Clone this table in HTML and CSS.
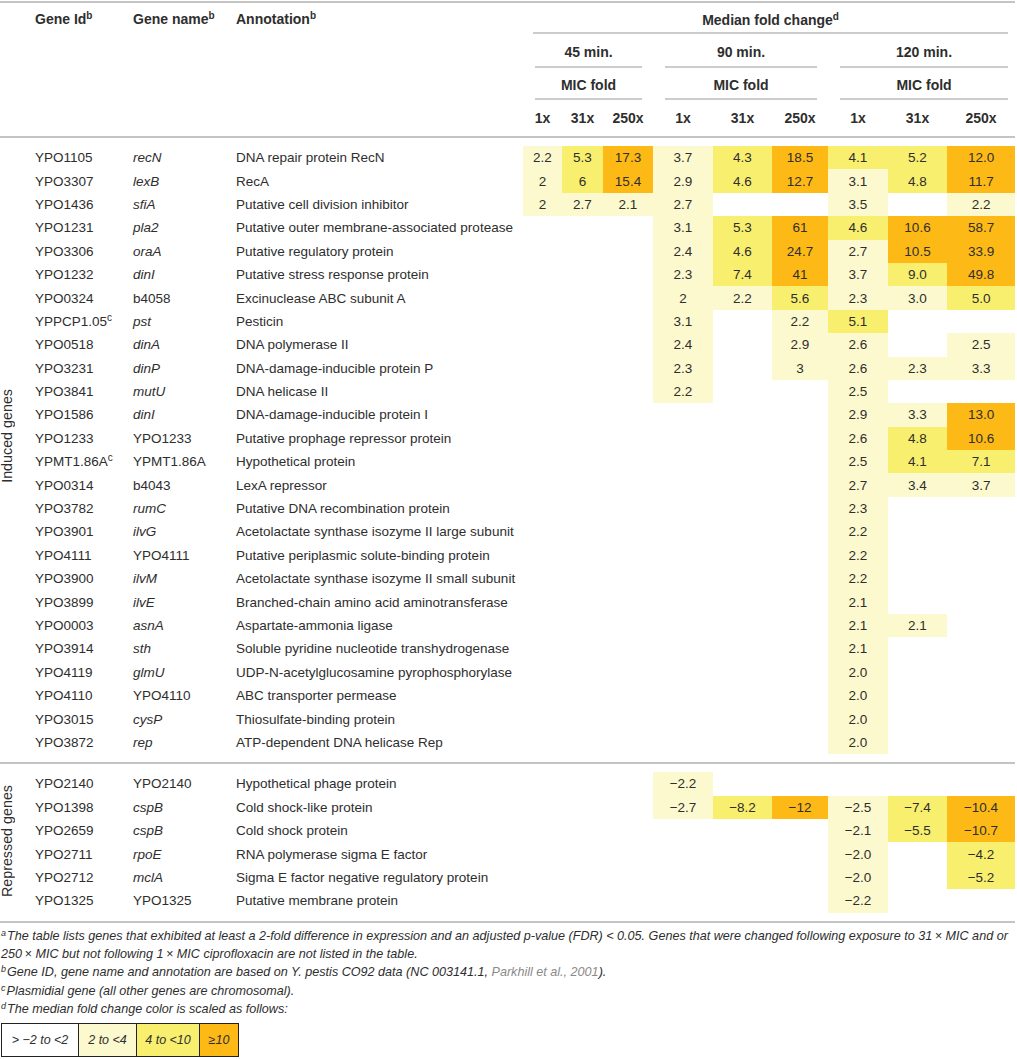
FILE: index.html
```html
<!DOCTYPE html>
<html lang="en">
<head>
    <meta charset="UTF-8">
    <title>Genes differentially expressed after ciprofloxacin exposure</title>
    <link rel="stylesheet" href="styles.css">
</head>
<body>

<table class="genes">
    <colgroup>
        <col class="w-label"><col class="w-id"><col class="w-name"><col class="w-ann">
        <col class="w-39"><col class="w-41"><col class="w-50">
        <col class="w-60"><col class="w-59"><col class="w-56">
        <col class="w-60"><col class="w-59"><col class="w-68">
    </colgroup>
    <thead>
        <tr class="h-top">
            <th></th>
            <th>Gene Id<sup>b</sup></th>
            <th>Gene name<sup>b</sup></th>
            <th>Annotation<sup>b</sup></th>
            <th colspan="9" class="span span-median"><div class="rule">Median fold change<sup>d</sup></div></th>
        </tr>
        <tr class="h-time">
            <th colspan="4"></th>
            <th colspan="3" class="span"><div class="rule">45 min.</div></th>
            <th colspan="3" class="span"><div class="rule">90 min.</div></th>
            <th colspan="3" class="span span-last"><div class="rule">120 min.</div></th>
        </tr>
        <tr class="h-mic">
            <th colspan="4"></th>
            <th colspan="3" class="span"><div class="rule">MIC fold</div></th>
            <th colspan="3" class="span"><div class="rule">MIC fold</div></th>
            <th colspan="3" class="span span-last"><div class="rule">MIC fold</div></th>
        </tr>
        <tr class="h-dose">
            <th colspan="4"></th>
            <th>1x</th><th>31x</th><th>250x</th>
            <th>1x</th><th>31x</th><th>250x</th>
            <th>1x</th><th>31x</th><th>250x</th>
        </tr>
    </thead>

    <tbody class="induced">
        <tr class="gap"><td colspan="13"></td></tr>
        <tr>
            <td rowspan="26" class="group group-induced"><span>Induced genes</span></td>
            <td>YPO1105</td><td><i>recN</i></td><td>DNA repair protein RecN</td>
            <td class="lo">2.2</td><td class="mid">5.3</td><td class="hi">17.3</td>
            <td class="lo">3.7</td><td class="mid">4.3</td><td class="hi">18.5</td>
            <td class="mid">4.1</td><td class="mid">5.2</td><td class="hi">12.0</td>
        </tr>
        <tr>
            <td>YPO3307</td><td><i>lexB</i></td><td>RecA</td>
            <td class="lo">2</td><td class="mid">6</td><td class="hi">15.4</td>
            <td class="lo">2.9</td><td class="mid">4.6</td><td class="hi">12.7</td>
            <td class="lo">3.1</td><td class="mid">4.8</td><td class="hi">11.7</td>
        </tr>
        <tr>
            <td>YPO1436</td><td><i>sfiA</i></td><td>Putative cell division inhibitor</td>
            <td class="lo">2</td><td class="lo">2.7</td><td class="lo">2.1</td>
            <td class="lo">2.7</td><td></td><td></td>
            <td class="lo">3.5</td><td></td><td class="lo">2.2</td>
        </tr>
        <tr>
            <td>YPO1231</td><td><i>pla2</i></td><td>Putative outer membrane-associated protease</td>
            <td></td><td></td><td></td>
            <td class="lo">3.1</td><td class="mid">5.3</td><td class="hi">61</td>
            <td class="mid">4.6</td><td class="hi">10.6</td><td class="hi">58.7</td>
        </tr>
        <tr>
            <td>YPO3306</td><td><i>oraA</i></td><td>Putative regulatory protein</td>
            <td></td><td></td><td></td>
            <td class="lo">2.4</td><td class="mid">4.6</td><td class="hi">24.7</td>
            <td class="lo">2.7</td><td class="hi">10.5</td><td class="hi">33.9</td>
        </tr>
        <tr>
            <td>YPO1232</td><td><i>dinI</i></td><td>Putative stress response protein</td>
            <td></td><td></td><td></td>
            <td class="lo">2.3</td><td class="mid">7.4</td><td class="hi">41</td>
            <td class="lo">3.7</td><td class="mid">9.0</td><td class="hi">49.8</td>
        </tr>
        <tr>
            <td>YPO0324</td><td>b4058</td><td>Excinuclease ABC subunit A</td>
            <td></td><td></td><td></td>
            <td class="lo">2</td><td class="lo">2.2</td><td class="mid">5.6</td>
            <td class="lo">2.3</td><td class="lo">3.0</td><td class="mid">5.0</td>
        </tr>
        <tr>
            <td>YPPCP1.05<sup>c</sup></td><td><i>pst</i></td><td>Pesticin</td>
            <td></td><td></td><td></td>
            <td class="lo">3.1</td><td></td><td class="lo">2.2</td>
            <td class="mid">5.1</td><td></td><td></td>
        </tr>
        <tr>
            <td>YPO0518</td><td><i>dinA</i></td><td>DNA polymerase II</td>
            <td></td><td></td><td></td>
            <td class="lo">2.4</td><td></td><td class="lo">2.9</td>
            <td class="lo">2.6</td><td></td><td class="lo">2.5</td>
        </tr>
        <tr>
            <td>YPO3231</td><td><i>dinP</i></td><td>DNA-damage-inducible protein P</td>
            <td></td><td></td><td></td>
            <td class="lo">2.3</td><td></td><td class="lo">3</td>
            <td class="lo">2.6</td><td class="lo">2.3</td><td class="lo">3.3</td>
        </tr>
        <tr>
            <td>YPO3841</td><td><i>mutU</i></td><td>DNA helicase II</td>
            <td></td><td></td><td></td>
            <td class="lo">2.2</td><td></td><td></td>
            <td class="lo">2.5</td><td></td><td></td>
        </tr>
        <tr>
            <td>YPO1586</td><td><i>dinI</i></td><td>DNA-damage-inducible protein I</td>
            <td></td><td></td><td></td>
            <td></td><td></td><td></td>
            <td class="lo">2.9</td><td class="lo">3.3</td><td class="hi">13.0</td>
        </tr>
        <tr>
            <td>YPO1233</td><td>YPO1233</td><td>Putative prophage repressor protein</td>
            <td></td><td></td><td></td>
            <td></td><td></td><td></td>
            <td class="lo">2.6</td><td class="mid">4.8</td><td class="hi">10.6</td>
        </tr>
        <tr>
            <td>YPMT1.86A<sup>c</sup></td><td>YPMT1.86A</td><td>Hypothetical protein</td>
            <td></td><td></td><td></td>
            <td></td><td></td><td></td>
            <td class="lo">2.5</td><td class="mid">4.1</td><td class="mid">7.1</td>
        </tr>
        <tr>
            <td>YPO0314</td><td>b4043</td><td>LexA repressor</td>
            <td></td><td></td><td></td>
            <td></td><td></td><td></td>
            <td class="lo">2.7</td><td class="lo">3.4</td><td class="lo">3.7</td>
        </tr>
        <tr>
            <td>YPO3782</td><td><i>rumC</i></td><td>Putative DNA recombination protein</td>
            <td></td><td></td><td></td>
            <td></td><td></td><td></td>
            <td class="lo">2.3</td><td></td><td></td>
        </tr>
        <tr>
            <td>YPO3901</td><td><i>ilvG</i></td><td>Acetolactate synthase isozyme II large subunit</td>
            <td></td><td></td><td></td>
            <td></td><td></td><td></td>
            <td class="lo">2.2</td><td></td><td></td>
        </tr>
        <tr>
            <td>YPO4111</td><td>YPO4111</td><td>Putative periplasmic solute-binding protein</td>
            <td></td><td></td><td></td>
            <td></td><td></td><td></td>
            <td class="lo">2.2</td><td></td><td></td>
        </tr>
        <tr>
            <td>YPO3900</td><td><i>ilvM</i></td><td>Acetolactate synthase isozyme II small subunit</td>
            <td></td><td></td><td></td>
            <td></td><td></td><td></td>
            <td class="lo">2.2</td><td></td><td></td>
        </tr>
        <tr>
            <td>YPO3899</td><td><i>ilvE</i></td><td>Branched-chain amino acid aminotransferase</td>
            <td></td><td></td><td></td>
            <td></td><td></td><td></td>
            <td class="lo">2.1</td><td></td><td></td>
        </tr>
        <tr>
            <td>YPO0003</td><td><i>asnA</i></td><td>Aspartate-ammonia ligase</td>
            <td></td><td></td><td></td>
            <td></td><td></td><td></td>
            <td class="lo">2.1</td><td class="lo">2.1</td><td></td>
        </tr>
        <tr>
            <td>YPO3914</td><td><i>sth</i></td><td>Soluble pyridine nucleotide transhydrogenase</td>
            <td></td><td></td><td></td>
            <td></td><td></td><td></td>
            <td class="lo">2.1</td><td></td><td></td>
        </tr>
        <tr>
            <td>YPO4119</td><td><i>glmU</i></td><td>UDP-N-acetylglucosamine pyrophosphorylase</td>
            <td></td><td></td><td></td>
            <td></td><td></td><td></td>
            <td class="lo">2.0</td><td></td><td></td>
        </tr>
        <tr>
            <td>YPO4110</td><td>YPO4110</td><td>ABC transporter permease</td>
            <td></td><td></td><td></td>
            <td></td><td></td><td></td>
            <td class="lo">2.0</td><td></td><td></td>
        </tr>
        <tr>
            <td>YPO3015</td><td><i>cysP</i></td><td>Thiosulfate-binding protein</td>
            <td></td><td></td><td></td>
            <td></td><td></td><td></td>
            <td class="lo">2.0</td><td></td><td></td>
        </tr>
        <tr>
            <td>YPO3872</td><td><i>rep</i></td><td>ATP-dependent DNA helicase Rep</td>
            <td></td><td></td><td></td>
            <td></td><td></td><td></td>
            <td class="lo">2.0</td><td></td><td></td>
        </tr>
        <tr class="gap"><td colspan="13"></td></tr>
    </tbody>

    <tbody class="repressed">
        <tr class="gap"><td colspan="13"></td></tr>
        <tr>
            <td rowspan="6" class="group"><span>Repressed genes</span></td>
            <td>YPO2140</td><td>YPO2140</td><td>Hypothetical phage protein</td>
            <td></td><td></td><td></td>
            <td class="lo">&minus;2.2</td><td></td><td></td>
            <td></td><td></td><td></td>
        </tr>
        <tr>
            <td>YPO1398</td><td><i>cspB</i></td><td>Cold shock-like protein</td>
            <td></td><td></td><td></td>
            <td class="lo">&minus;2.7</td><td class="mid">&minus;8.2</td><td class="hi">&minus;12</td>
            <td class="lo">&minus;2.5</td><td class="mid">&minus;7.4</td><td class="hi">&minus;10.4</td>
        </tr>
        <tr>
            <td>YPO2659</td><td><i>cspB</i></td><td>Cold shock protein</td>
            <td></td><td></td><td></td>
            <td></td><td></td><td></td>
            <td class="lo">&minus;2.1</td><td class="mid">&minus;5.5</td><td class="hi">&minus;10.7</td>
        </tr>
        <tr>
            <td>YPO2711</td><td><i>rpoE</i></td><td>RNA polymerase sigma E factor</td>
            <td></td><td></td><td></td>
            <td></td><td></td><td></td>
            <td class="lo">&minus;2.0</td><td></td><td class="mid">&minus;4.2</td>
        </tr>
        <tr>
            <td>YPO2712</td><td><i>mclA</i></td><td>Sigma E factor negative regulatory protein</td>
            <td></td><td></td><td></td>
            <td></td><td></td><td></td>
            <td class="lo">&minus;2.0</td><td></td><td class="mid">&minus;5.2</td>
        </tr>
        <tr>
            <td>YPO1325</td><td>YPO1325</td><td>Putative membrane protein</td>
            <td></td><td></td><td></td>
            <td></td><td></td><td></td>
            <td class="lo">&minus;2.2</td><td></td><td></td>
        </tr>
        <tr class="gap"><td colspan="13"></td></tr>
    </tbody>
</table>

<div class="notes">
    <p><sup>a</sup>The table lists genes that exhibited at least a 2-fold difference in expression and an adjusted p-value (FDR) &lt; 0.05. Genes that were changed following exposure to 31&thinsp;&times; MIC and or<br>250&thinsp;&times; MIC but not following 1&thinsp;&times; MIC ciprofloxacin are not listed in the table.</p>
    <p><sup>b</sup>Gene ID, gene name and annotation are based on Y. pestis CO92 data (NC 003141.1, <span class="ref">Parkhill et al., 2001</span>).</p>
    <p><sup>c</sup>Plasmidial gene (all other genes are chromosomal).</p>
    <p><sup>d</sup>The median fold change color is scaled as follows:</p>
</div>

<div class="legend">
    <div class="key key-none">&gt; &minus;2 to &lt;2</div>
    <div class="key lo">2 to &lt;4</div>
    <div class="key mid">4 to &lt;10</div>
    <div class="key hi">&ge;10</div>
</div>

</body>
</html>
```

FILE: styles.css
```css
body {
    margin: 0;
    padding: 1px 0 0 0;
    font-family: "Liberation Sans", Arial, Helvetica, sans-serif;
    color: #2e2e2e;
    background-color: #ffffff;
}

.genes {
    border-collapse: collapse;
    table-layout: fixed;
    width: 1015px;
    font-size: 13.5px;
}

.w-label { width: 35px; }
.w-id { width: 98px; }
.w-name { width: 103px; }
.w-ann { width: 287px; }
.w-39 { width: 39px; }
.w-41 { width: 41px; }
.w-50 { width: 50px; }
.w-56 { width: 56px; }
.w-59 { width: 59px; }
.w-60 { width: 60px; }
.w-68 { width: 68px; }

/* header */
.genes th {
    padding: 0;
    font-size: 14px;
    font-weight: bold;
    text-align: left;
    white-space: nowrap;
}

.genes sup {
    font-size: 10px;
    line-height: 0;
    vertical-align: 5px;
}

.h-top th {
    border-top: 2px solid #c4c4c4;
    height: 30px;
}

.h-dose th {
    height: 36px;
    text-align: center;
    border-bottom: 2px solid #c4c4c4;
}

.genes th.span {
    padding: 0 11px 0 12px;
    text-align: center;
}

.genes th.span-median {
    padding: 0 7px 0 10px;
}

.genes th.span-last {
    padding-right: 7px;
}

.rule {
    border-bottom: 2px solid #cccccc;
}

.h-top .rule {
    height: 29px;
    line-height: 34px;
}

.h-time .rule {
    height: 32px;
    line-height: 36px;
}

.h-mic .rule {
    height: 30px;
    line-height: 34px;
}

/* body */
.genes td {
    padding: 0;
    height: 23.4px;
    white-space: nowrap;
    vertical-align: middle;
}

.genes td:nth-last-child(-n+9) {
    text-align: center;
}

.genes tr.gap td {
    height: 8px;
}

.repressed {
    border-top: 2px solid #c4c4c4;
    border-bottom: 2px solid #c4c4c4;
}

.genes td.group {
    text-align: left;
    vertical-align: middle;
    font-size: 14.3px;
}

.genes td.group-induced {
    padding-bottom: 26px;
}

.group span {
    display: inline-block;
    writing-mode: vertical-rl;
    transform: rotate(180deg);
    line-height: 15px;
}

.lo { background-color: #fdf9cf; }
.mid { background-color: #f9ef6e; }
.hi { background-color: #fdba16; }

/* footnotes */
.notes {
    padding: 4px 0 0 1px;
    font-size: 12.6px;
    font-style: italic;
    line-height: 18.4px;
}

.notes p {
    margin: 0;
}

.notes sup {
    font-size: 9px;
    line-height: 0;
    vertical-align: 4px;
    margin-right: 1px;
}

.notes .ref {
    color: #8a8a8a;
}

.legend {
    display: flex;
    margin: 4px 0 0 1px;
}

.key {
    height: 32px;
    line-height: 32px;
    border: 1px solid #222222;
    border-left: none;
    font-size: 12.5px;
    font-style: italic;
    text-align: center;
}

.key-none {
    width: 76px;
    border-left: 1px solid #222222;
}

.key.lo { width: 57px; }
.key.mid { width: 62px; }
.key.hi { width: 38px; }
```
